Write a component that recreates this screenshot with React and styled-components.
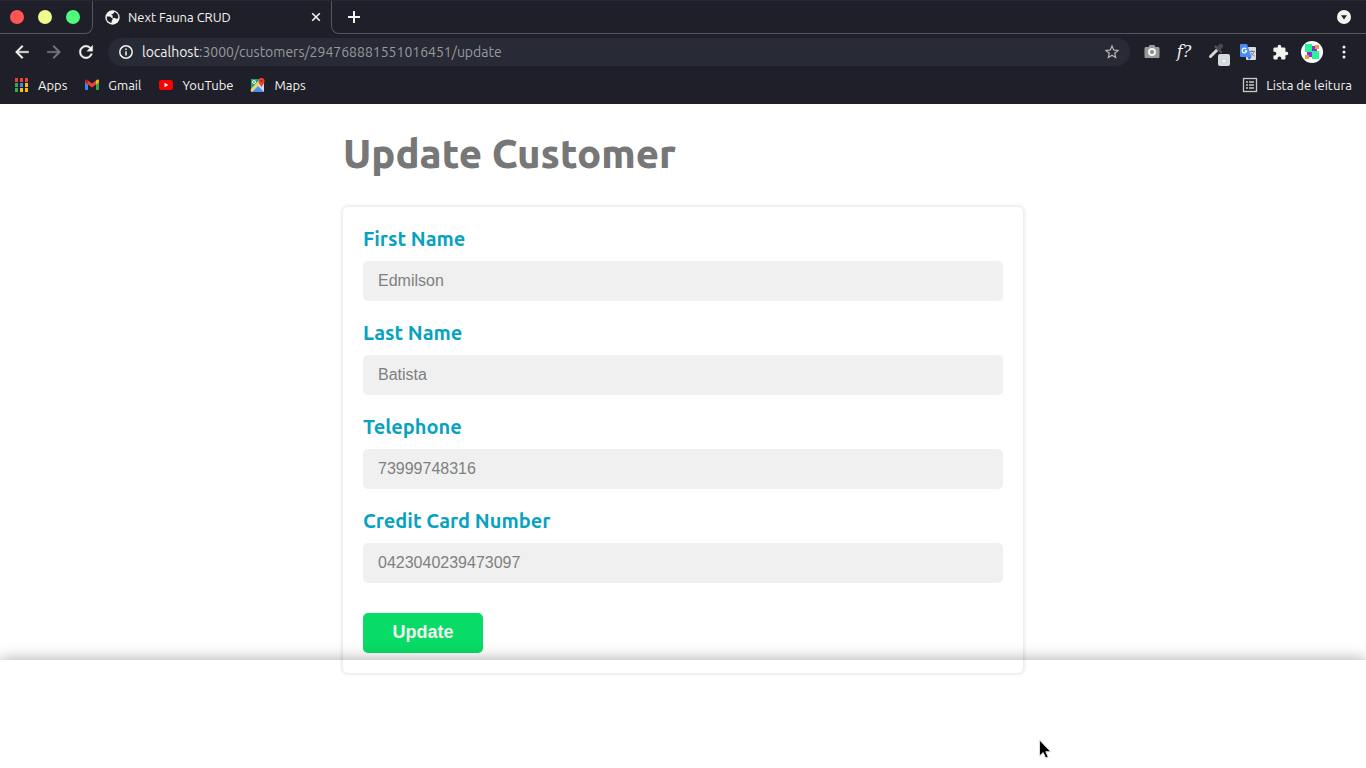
import React from "react";
import styled, { createGlobalStyle } from "styled-components";

const ui = `"Ubuntu", "Noto Sans", sans-serif`;

const Global = createGlobalStyle`
  *, *::before, *::after { box-sizing: border-box; }
  body { margin: 0; background: #fff; font-family: ${ui}; }
  button { font-family: inherit; cursor: pointer; }
`;

const Screen = styled.div`
  position: relative;
  display: flex;
  flex-direction: column;
  min-height: 100vh;
  overflow: hidden;
`;

const Chrome = styled.header`
  background: #1e1f29;
  color: #f4f4ef;
  padding-bottom: 4px;
`;

const TabStrip = styled.div`
  display: flex;
  height: 34px;
  border-top: 1px solid #272833;
`;

const Lights = styled.div`
  display: flex;
  align-items: center;
  gap: 14px;
  width: 93px;
  padding-left: 10px;
  border-bottom: 1px solid #54555d;
  border-right: 1px solid #54555d;
  border-bottom-right-radius: 8px;
`;

const Light = styled.button`
  width: 14px;
  height: 14px;
  padding: 0;
  border: 0;
  border-radius: 50%;
  background: ${(p) => p.$color};
`;

const Tab = styled.div`
  display: flex;
  align-items: center;
  width: 238px;
  padding: 0 7px 1px 12px;
`;

const TabTitle = styled.span`
  flex: 1;
  padding-left: 8px;
  white-space: nowrap;
  font-size: 13px;
  line-height: 16px;
`;

const StripRest = styled.div`
  display: flex;
  flex: 1;
  align-items: center;
  justify-content: space-between;
  padding: 0 14px 0 12px;
  border-bottom: 1px solid #54555d;
  border-left: 1px solid #54555d;
  border-bottom-left-radius: 8px;
`;

const IconButton = styled.button`
  display: flex;
  flex: none;
  align-items: center;
  justify-content: center;
  width: ${(p) => p.$size || 20}px;
  height: ${(p) => p.$size || 20}px;
  padding: 0;
  border: 0;
  background: none;
  color: inherit;
`;

const Toolbar = styled.div`
  display: flex;
  align-items: center;
  height: 36px;
  padding: 0 10px 0 12px;
`;

const NavButtons = styled.nav`
  display: flex;
  gap: 12px;
  margin-right: 12px;
`;

const AddressBar = styled.div`
  display: flex;
  flex: 1;
  align-items: center;
  height: 28px;
  padding: 0 8px;
  border-radius: 14px;
  background: #282a36;
`;

const Address = styled.div`
  flex: 1;
  padding-left: 6px;
  font-size: 14px;
  color: #999a9c;
  white-space: nowrap;
`;

const Host = styled.span`
  color: #f4f4ef;
`;

const Extensions = styled.div`
  display: flex;
  align-items: center;
  gap: 8px;
  margin-left: 10px;
`;

const Bookmarks = styled.nav`
  display: flex;
  align-items: center;
  gap: 17px;
  height: 30px;
  padding: 0 14px;
`;

const Bookmark = styled.a`
  display: flex;
  align-items: center;
  gap: 8px;
  margin-left: ${(p) => (p.$end ? "auto" : "0")};
  font-size: 13px;
  line-height: 16px;
  color: inherit;
  text-decoration: none;
  white-space: nowrap;
`;

const Main = styled.main`
  width: 100%;
  max-width: 680px;
  margin: 0 auto;
`;

const Title = styled.h1`
  margin: 24px 0 28px;
  font-size: 40px;
  line-height: 51px;
  font-weight: 800;
  color: #777;
`;

const Card = styled.form`
  padding: 20px;
  border-radius: 5px;
  box-shadow: 0 0 3px 2px rgba(0, 0, 0, 0.08);
`;

const Field = styled.div`
  display: flex;
  flex-direction: column;
  gap: 10px;
  margin-bottom: 20px;
`;

const Label = styled.label`
  font-size: 20px;
  line-height: 24px;
  font-weight: 600;
  color: #06a2c0;
`;

const Input = styled.input`
  width: 100%;
  height: 40px;
  padding: 0 15px;
  border: 0;
  border-radius: 5px;
  background: #f0f0f0;
  color: #808080;
  font: 16px "Liberation Sans", Arial, sans-serif;
`;

const Submit = styled.button`
  display: block;
  width: 120px;
  height: 40px;
  margin-top: 30px;
  padding: 0 0 2px;
  border: 0;
  border-radius: 5px;
  background: #08dc66;
  color: #f0f0f0;
  && {
    font: bold 18px "Liberation Sans", Arial, sans-serif;
  }
`;

const Footer = styled.footer`
  position: absolute;
  right: 0;
  bottom: 0;
  left: 0;
  height: 108px;
  box-shadow: 0 0 15px rgba(0, 0, 0, 0.35);
  pointer-events: none;
`;

const Pointer = styled.svg`
  position: absolute;
  left: 76%;
  bottom: 8px;
  pointer-events: none;
`;

const Globe = () => (
  <svg width="15" height="15" viewBox="0 0 15 15" aria-hidden="true">
    <circle cx="7.500" cy="7.500" r="7.200" fill="#f4f4ef" />
    <path
      d="M1.800 6.600h2.800c1.500 0 1.500 1.400 2.400 1.600 1.200.3.900 1.300.2 1.900-.6.500-.3 1.500-1 3A6 6 0 0 1 1.800 6.600zM9 1.700A6 6 0 0 1 13.300 8c-.8.900-1.900 1-2.500.5-.8-.7-1.500-.6-2.400-.6-.9-.1-1.300-1-.7-1.500.5-.5 0-1-.9-1.200-.8-.3-.3-1.300.6-1.300S9.300 3 9 1.700z"
      fill="#1e1f29"
    />
  </svg>
);

const Cross = () => (
  <svg width="10" height="10" viewBox="0 0 10 10" fill="none" stroke="currentColor" strokeWidth="1.600">
    <path d="M1.200 1.200l7.600 7.600M8.800 1.200L1.200 8.800" />
  </svg>
);

const Plus = () => (
  <svg width="12" height="12" viewBox="0 0 12 12" fill="none" stroke="currentColor" strokeWidth="2">
    <path d="M6 0v12M0 6h12" />
  </svg>
);

const TabSearch = () => (
  <svg width="14" height="14" viewBox="0 0 14 14">
    <circle cx="7" cy="7" r="7" fill="#f4f4ef" />
    <path d="M4 5.300h6L7 9.400z" fill="#1e1f29" />
  </svg>
);

const Arrow = ({ forward }) => (
  <svg width="20" height="20" viewBox="0 0 24 24" fill={forward ? "#77787c" : "#f4f4ef"}>
    <path
      d={
        forward
          ? "M12 4l-1.410 1.410L16.170 11H4v2h12.170l-5.580 5.590L12 20l8-8z"
          : "M20 11H7.830l5.590-5.590L12 4l-8 8 8 8 1.410-1.410L7.830 13H20z"
      }
      stroke={forward ? "#77787c" : "#f4f4ef"}
      strokeWidth=".4"
    />
  </svg>
);

const Reload = () => (
  <svg width="20" height="20" viewBox="0 0 24 24" fill="#f4f4ef" stroke="#f4f4ef" strokeWidth=".4">
    <path d="M17.650 6.350C16.200 4.900 14.210 4 12 4c-4.420 0-7.990 3.580-7.990 8s3.570 8 7.990 8c3.730 0 6.840-2.550 7.730-6h-2.080c-.82 2.330-3.040 4-5.650 4-3.310 0-6-2.690-6-6s2.690-6 6-6c1.660 0 3.140.69 4.220 1.780L13 11h7V4z" />
  </svg>
);

const Info = () => (
  <svg width="20" height="20" viewBox="0 0 20 20" fill="none" stroke="#f4f4ef" strokeWidth="1.500">
    <circle cx="10" cy="10" r="6.200" />
    <path d="M10 9.200v4.300M10 6.500v1.500" />
  </svg>
);

const Star = () => (
  <svg width="18" height="18" viewBox="0 0 24 24" fill="#b8b8b7">
    <path d="M22 9.240l-7.190-.62L12 2 9.190 8.630 2 9.240l5.460 4.730L5.820 21 12 17.270 18.180 21l-1.630-7.030zM12 15.400l-3.760 2.270 1-4.280-3.320-2.880 4.380-.38L12 6.100l1.710 4.040 4.380.38-3.320 2.880 1 4.280z" />
  </svg>
);

const Camera = () => (
  <svg width="16" height="16" viewBox="0 0 16 16">
    <path d="M2 3h2.500l1-2h5l1 2H14c1 0 1.500.5 1.500 1.500v8c0 1-.5 1.500-1.500 1.500H2C1 14 .5 13.500.5 12.500v-8C.5 3.500 1 3 2 3z" fill="#999" />
    <circle cx="8" cy="8" r="3" fill="#8a8a8a" stroke="#f2f2f2" strokeWidth="2" />
  </svg>
);

const WhatFont = styled.span`
  font: italic 16px/20px "DejaVu Serif", "Liberation Serif", serif;
`;

const Picker = () => (
  <svg width="24" height="24" viewBox="0 0 24 24" fill="none" overflow="visible">
    <path d="M6.500 16.500L14 9" stroke="#d8d8d5" strokeWidth="3" strokeLinecap="round" />
    <path d="M11.500 6.500l5.500 5.500" stroke="#55565a" strokeWidth="2.200" strokeLinecap="round" />
    <path d="M14.500 8.500l2.300-2.300" stroke="#4a4b4f" strokeWidth="4.500" strokeLinecap="round" />
    <rect x="14" y="14" width="12" height="12" rx="2" fill="#d3dcda" />
    <rect x="19" y="20" width="2" height="2" fill="#fff" />
  </svg>
);

const Translate = () => (
  <svg width="16" height="16" viewBox="0 0 16 16">
    <rect x="6" y="3" width="10" height="13" rx="1" fill="#d8dadd" />
    <path d="M9.500 7.500h5.500M12 6v1.500M14 7.500c-.5 2-2 3.500-3.500 4.500M11 8.500c.8 1.500 2 3 3.500 3.500" stroke="#75838c" fill="none" />
    <path d="M1 0h6l4.500 13H1a1 1 0 0 1-1-1V1a1 1 0 0 1 1-1z" fill="#4b8bf5" />
    <path d="M7.500 13h4L9 16z" fill="#3367d6" />
    <path d="M6.200 5A2.300 2.300 0 1 0 6.700 6.800H4.700" fill="none" stroke="#fff" strokeWidth="1.200" />
  </svg>
);

const Puzzle = () => (
  <svg width="17" height="17" viewBox="0 0 24 24" fill="#f4f4ef">
    <path d="M20.500 11H19V7c0-1.100-.9-2-2-2h-4V3.500a2.500 2.500 0 0 0-5 0V5H4c-1.100 0-2 .9-2 2v3.800h1.500a2.700 2.700 0 0 1 0 5.400H2V20c0 1.100.9 2 2 2h3.800v-1.500a2.700 2.700 0 0 1 5.400 0V22H17c1.100 0 2-.9 2-2v-4h1.500a2.500 2.500 0 0 0 0-5z" />
  </svg>
);

const Avatar = () => (
  <svg width="22" height="22" viewBox="0 0 22 22">
    <circle cx="11" cy="11" r="11" fill="#fff" />
    <path d="M11 5h5v5h-5zM6 11h5v5H6z" fill="#8d2fd8" />
    <path d="M4 3h7v8H4zM11 10h7v8h-7z" fill="#26f596" />
    <path d="M14 4h4v4h-4zM4 14h4v4H4z" fill="#f39a35" />
  </svg>
);

const Dots = () => (
  <svg width="4" height="14" viewBox="0 0 4 14" fill="#f4f4ef">
    <circle cx="2" cy="2" r="1.500" />
    <circle cx="2" cy="7" r="1.500" />
    <circle cx="2" cy="12" r="1.500" />
  </svg>
);

const APP_COLORS = ["#ea4335", "#ea4335", "#ea4335", "#34a853", "#4285f4", "#fbbc05", "#34a853", "#fbbc05", "#fbbc05"];

const AppsIcon = () => (
  <svg width="16" height="16" viewBox="0 0 16 16">
    {APP_COLORS.map((c, i) => (
      <rect key={i} x={1 + (i % 3) * 5} y={1 + Math.floor(i / 3) * 5} width="3" height="4" fill={c} />
    ))}
  </svg>
);

const GmailIcon = () => (
  <svg width="16" height="16" viewBox="0 0 16 16">
    <path d="M1 4.500l3 2.200V13H2a1 1 0 0 1-1-1z" fill="#4285f4" />
    <path d="M15 4.500l-3 2.200V13h2a1 1 0 0 0 1-1z" fill="#34a853" />
    <path d="M12 3.500l1-.7c.8-.6 2 0 2 1.100v1.400l-3 2.200z" fill="#fbbc04" />
    <path d="M4 3.500l4 3 4-3v4l-4 3-4-3z" fill="#ea4335" />
    <path d="M1 3.900c0-1.100 1.200-1.700 2-1.100l1 .7v4L1 5.300z" fill="#c5221f" />
  </svg>
);

const YouTubeIcon = () => (
  <svg width="16" height="16" viewBox="0 0 16 16">
    <rect x="1" y="3" width="14" height="10" rx="2.500" fill="#f00" />
    <path d="M6.500 5.800v4.400L10.300 8z" fill="#fff" />
  </svg>
);

const MapsIcon = () => (
  <svg width="16" height="16" viewBox="0 0 16 16">
    <rect x="1" y="2" width="13" height="13" rx="1" fill="#d9dce0" />
    <path d="M1 3a1 1 0 0 1 1-1h8L1 12z" fill="#1fa463" />
    <path d="M2 15l6-6 6 6z" fill="#4c8bf5" />
    <path d="M1 14L12 3" stroke="#ffd04b" strokeWidth="2" />
    <circle cx="4" cy="5" r="1.500" fill="none" stroke="#fff" />
    <path d="M11.500 10.500C11 8 8.500 7 8.500 4a3 3 0 0 1 6 0c0 3-2.500 4-3 6.500z" fill="#ea4335" />
    <circle cx="11.500" cy="4" r="1" fill="#8c1d18" />
  </svg>
);

const ReadingList = () => (
  <svg width="16" height="16" viewBox="0 0 16 16" fill="none" stroke="#c8c8c5">
    <rect x="1.500" y="1.500" width="13" height="13" strokeWidth="1.300" />
    <path d="M4 5h2M7 5h5M4 8h2M7 8h5M4 11h2M7 11h5" strokeWidth="1.500" />
  </svg>
);

const LINKS = [
  ["Apps", AppsIcon],
  ["Gmail", GmailIcon],
  ["YouTube", YouTubeIcon],
  ["Maps", MapsIcon],
];

const FIELDS = [
  ["firstName", "First Name", "Edmilson"],
  ["lastName", "Last Name", "Batista"],
  ["telephone", "Telephone", "73999748316"],
  ["creditCard", "Credit Card Number", "0423040239473097"],
];

export default function App() {
  return (
    <Screen>
      <Global />
      <Chrome>
        <TabStrip>
          <Lights>
            <Light $color="#ff5555" aria-label="Close window" />
            <Light $color="#f1fa8c" aria-label="Minimize" />
            <Light $color="#50fa7b" aria-label="Maximize" />
          </Lights>
          <Tab>
            <Globe />
            <TabTitle>Next Fauna CRUD</TabTitle>
            <IconButton $size={16} aria-label="Close tab"><Cross /></IconButton>
          </Tab>
          <StripRest>
            <IconButton aria-label="New tab"><Plus /></IconButton>
            <IconButton $size={16} aria-label="Search tabs"><TabSearch /></IconButton>
          </StripRest>
        </TabStrip>
        <Toolbar>
          <NavButtons>
            <IconButton aria-label="Back"><Arrow /></IconButton>
            <IconButton aria-label="Forward"><Arrow forward /></IconButton>
            <IconButton aria-label="Reload"><Reload /></IconButton>
          </NavButtons>
          <AddressBar>
            <IconButton aria-label="Site information"><Info /></IconButton>
            <Address><Host>localhost</Host>:3000/customers/294768881551016451/update</Address>
            <IconButton aria-label="Bookmark page"><Star /></IconButton>
          </AddressBar>
          <Extensions>
            <IconButton $size={24} aria-label="Screenshot"><Camera /></IconButton>
            <IconButton $size={24} aria-label="Font finder"><WhatFont>f?</WhatFont></IconButton>
            <IconButton $size={24} aria-label="Color picker"><Picker /></IconButton>
            <IconButton $size={24} aria-label="Translate"><Translate /></IconButton>
            <IconButton $size={24} aria-label="Extensions"><Puzzle /></IconButton>
            <IconButton $size={24} aria-label="Profile"><Avatar /></IconButton>
            <IconButton $size={24} aria-label="Menu"><Dots /></IconButton>
          </Extensions>
        </Toolbar>
        <Bookmarks>
          {LINKS.map(([name, Icon]) => (
            <Bookmark key={name} href="#"><Icon />{name}</Bookmark>
          ))}
          <Bookmark href="#" $end><ReadingList />Lista de leitura</Bookmark>
        </Bookmarks>
      </Chrome>
      <Main>
        <Title>Update Customer</Title>
        <Card onSubmit={(e) => e.preventDefault()}>
          {FIELDS.map(([id, label, value]) => (
            <Field key={id}>
              <Label htmlFor={id}>{label}</Label>
              <Input id={id} type="text" defaultValue={value} />
            </Field>
          ))}
          <Submit type="submit">Update</Submit>
        </Card>
      </Main>
      <Footer />
      <Pointer width="14" height="21" viewBox="0 0 14 21" aria-hidden="true">
        <path d="M1.500 1v16l3.700-3.400 2.500 5.500 2.500-1.200-2.400-5.200h5z" fill="#000" stroke="#ddd" />
      </Pointer>
    </Screen>
  );
}
